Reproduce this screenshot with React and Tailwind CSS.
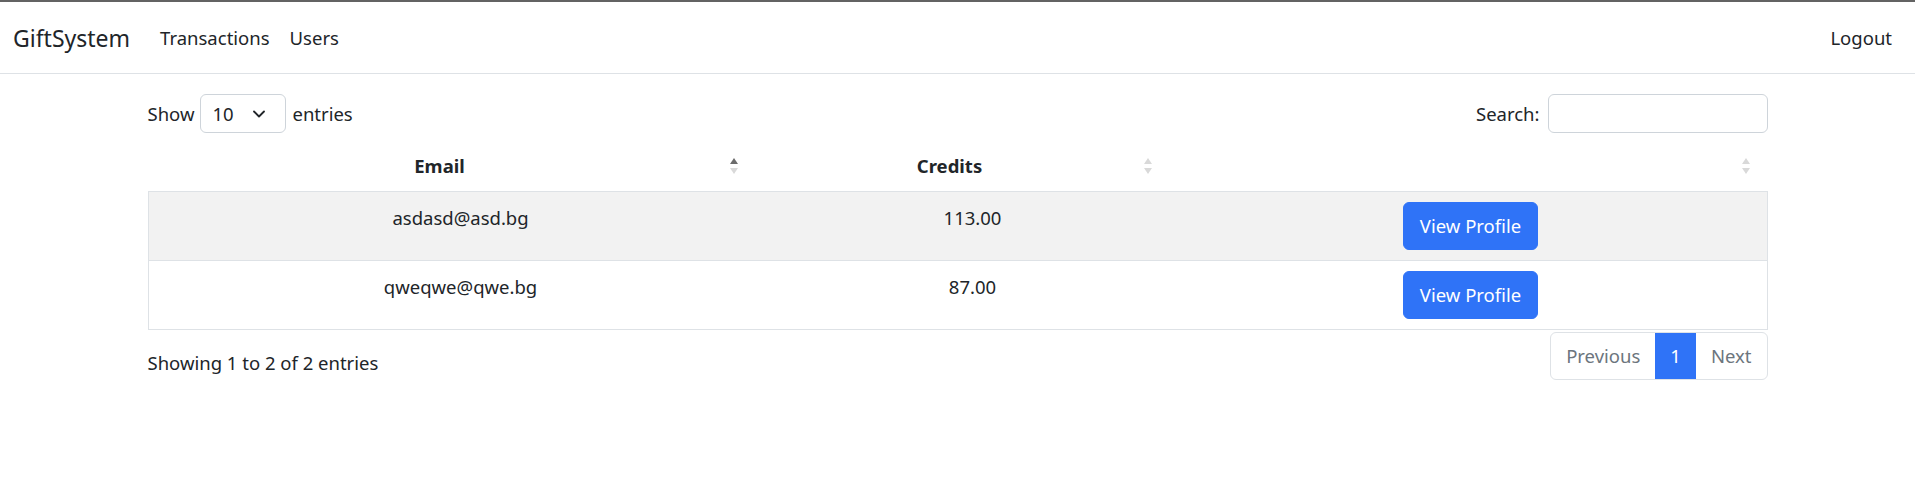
import React from 'react';
import { ChevronDown } from 'lucide-react';

function SortArrows({ active, className }) {
  return (
    <span className={`absolute top-1/2 -translate-y-1/2 flex flex-col gap-[4px] ${className}`}>
      <svg width="8" height="6" viewBox="0 0 8 6">
        <path d="M4 0 L8 6 L0 6 Z" fill={active ? '#6c6c6c' : '#d9d9d9'} />
      </svg>
      <svg width="8" height="6" viewBox="0 0 8 6">
        <path d="M0 0 L8 0 L4 6 Z" fill="#d9d9d9" />
      </svg>
    </span>
  );
}

export default function App() {
  const users = [
    { email: 'asdasd@asd.bg', credits: '113.00' },
    { email: 'qweqwe@qwe.bg', credits: '87.00' },
  ];

  return (
    <div className="min-h-screen bg-white text-[#212529] text-[18.5px] leading-[30px] font-['Noto_Sans',sans-serif]">
      {/* Navbar */}
      <div className="h-[2px] bg-[#636363]" />
      <nav className="h-[72px] border-b border-[#dee2e6] flex items-center pl-[13px] pr-[23px]">
        <span className="text-[23px] mr-[20px]">GiftSystem</span>
        <a className="px-[10px]">Transactions</a>
        <a className="px-[10px]">Users</a>
        <a className="ml-auto">Logout</a>
      </nav>

      <div className="max-w-[1650px] mx-auto px-[15px]">
        {/* Top controls */}
        <div className="mt-[20px] flex items-center justify-between h-[39px]">
          <div className="flex items-center">
            <span>Show</span>
            <div className="ml-[6px] mr-[6px] w-[86px] h-[39px] border border-[#ced4da] rounded-[6px] flex items-center justify-between pl-[11px] pr-[16px]">
              <span>10</span>
              <ChevronDown className="w-[20px] h-[20px]" strokeWidth={2.2} />
            </div>
            <span>entries</span>
          </div>
          <div className="flex items-center">
            <span className="mr-[8px]">Search:</span>
            <input className="w-[220px] h-[39px] border border-[#ced4da] rounded-[6px] outline-none px-[12px]" />
          </div>
        </div>

        {/* Table */}
        <div className="mt-[8px]">
          <div className="grid grid-cols-[624px_400px_596px] border-b border-[#dee2e6] font-bold">
            <div className="relative py-[10px] pl-[10px] pr-[50px] text-center">
              Email
              <SortArrows active className="right-[34px]" />
            </div>
            <div className="relative py-[10px] pl-[10px] pr-[54px] text-center">
              Credits
              <SortArrows className="right-[20px]" />
            </div>
            <div className="relative py-[10px] px-[10px]">
              &nbsp;
              <SortArrows className="right-[18px]" />
            </div>
          </div>
          {users.map((u, idx) => (
            <div
              key={idx}
              className={`grid grid-cols-[624px_400px_596px] border-x border-b border-[#dee2e6] ${idx === 0 ? 'bg-[#f2f2f2]' : 'bg-white'}`}
            >
              <div className="py-[11px] px-[10px] text-center">{u.email}</div>
              <div className="py-[11px] px-[10px] text-center">{u.credits}</div>
              <div className="py-[10px] px-[10px] flex justify-center">
                <button className="h-[48px] px-[16px] rounded-[6px] bg-[#2f73f7] border border-[#2f73f7] text-white">
                  View Profile
                </button>
              </div>
            </div>
          ))}
        </div>

        {/* Footer */}
        <div className="mt-[2px] flex justify-between items-start">
          <div className="pt-[16px]">Showing 1 to 2 of 2 entries</div>
          <div className="flex h-[48px] border border-[#dee2e6] rounded-[6px] overflow-hidden">
            <span className="px-[15px] flex items-center text-[#6c757d]">Previous</span>
            <span className="px-[15px] flex items-center bg-[#2f73f7] text-white">1</span>
            <span className="px-[15px] flex items-center text-[#6c757d]">Next</span>
          </div>
        </div>
      </div>
    </div>
  );
}
